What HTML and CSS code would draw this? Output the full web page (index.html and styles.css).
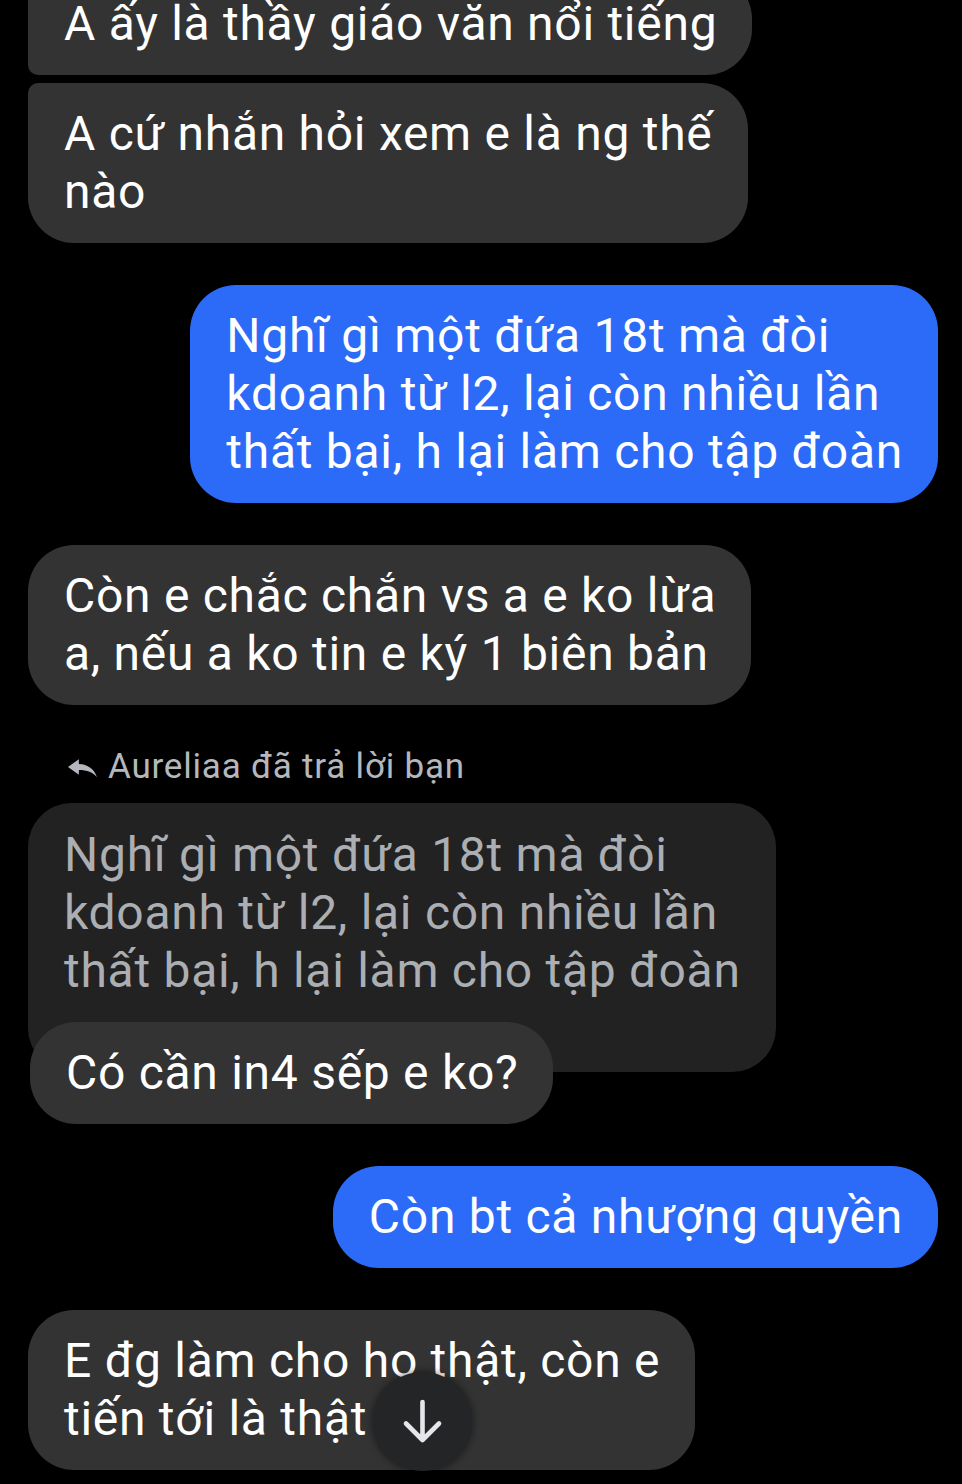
FILE: index.html
```html
<!DOCTYPE html>
<html lang="vi">
<head>
<meta charset="utf-8">
<title>Chat</title>
<link rel="stylesheet" href="styles.css">
</head>
<body>
<main class="thread">
  <div class="group">
    <div class="bubble in grp-mid">A ấy là thầy giáo văn nổi tiếng</div>
    <div class="bubble in grp-last">A cứ nhắn hỏi xem e là ng thế<br>nào</div>
  </div>

  <div class="group out-group">
    <div class="bubble out">Nghĩ gì một đứa 18t mà đòi<br>kdoanh từ l2, lại còn nhiều lần<br>thất bại, h lại làm cho tập đoàn</div>
  </div>

  <div class="group">
    <div class="bubble in">Còn e chắc chắn vs a e ko lừa<br>a, nếu a ko tin e ký 1 biên bản</div>
  </div>

  <div class="group reply-group">
    <div class="reply-label">
      <svg class="reply-icon" viewBox="0 0 28 18" width="29" height="19" aria-hidden="true"><path d="M0 7.5 L10.5 0 V4.6 C19 4.8 25.5 9.5 28 17.5 C24 12.6 18.5 10.4 10.5 10.4 V15 Z" fill="#b4b7bc"/></svg>
      <span>Aureliaa đã trả lời bạn</span>
    </div>
    <div class="bubble quoted">Nghĩ gì một đứa 18t mà đòi<br>kdoanh từ l2, lại còn nhiều lần<br>thất bại, h lại làm cho tập đoàn</div>
    <div class="bubble in over">Có cần in4 sếp e ko?</div>
  </div>

  <div class="group out-group">
    <div class="bubble out">Còn bt cả nhượng quyền</div>
  </div>

  <div class="group">
    <div class="bubble in last">E đg làm cho họ thật, còn e<br>tiến tới là thật =)))<span class="tail">)</span>
      <button class="scroll-down" type="button" aria-label="Cuộn xuống">
        <svg viewBox="0 0 99 99" width="99" height="99" aria-hidden="true"><path d="M49.5 30 V67 M33 51.5 L49.5 68 L66 51.5" fill="none" stroke="#e4e6eb" stroke-width="4.6" stroke-linecap="round" stroke-linejoin="round"/></svg>
      </button>
    </div>
  </div>
</main>
</body>
</html>
```

FILE: styles.css
```css
html, body {
  margin: 0;
  padding: 0;
  background: #000;
}

body {
  width: 962px;
  height: 1484px;
  overflow: hidden;
  font-family: Roboto, "Noto Sans", "Liberation Sans", sans-serif;
  font-size: 48px;
  line-height: 58px;
  letter-spacing: 0.72px;
  color: #fff;
}

.thread {
  display: flex;
  flex-direction: column;
  gap: 42px;
  padding: 0 24px 0 28px;
  margin-top: -27px;
}

.group {
  display: flex;
  flex-direction: column;
  align-items: flex-start;
  gap: 8px;
}

.out-group {
  align-items: flex-end;
}

.bubble {
  padding: 22px 35px 22px 36px;
  border-radius: 46px;
  white-space: nowrap;
}

.in {
  background: #333333;
}

.out {
  background: #2b6bf7;
}

.grp-mid {
  border-radius: 10px 46px 46px 10px;
}

.grp-last {
  border-radius: 10px 46px 46px 46px;
}

.reply-group {
  gap: 0;
}

.reply-label {
  display: flex;
  align-items: center;
  gap: 11px;
  height: 40px;
  margin: 0 0 16px 40px;
  font-size: 35px;
  line-height: 40px;
  letter-spacing: 0.8px;
  color: #b4b7bc;
}

.reply-icon {
  display: block;
  margin-top: 2px;
}

.quoted {
  background: #222222;
  color: #abaeb3;
  padding: 23px 35px 72px 36px;
  border-radius: 44px;
}

.over {
  position: relative;
  margin-top: -50px;
  margin-left: 2px;
}

.last {
  position: relative;
}

.tail {
  margin-left: -6px;
}

.scroll-down {
  position: absolute;
  left: 345px;
  top: 62px;
  width: 99px;
  height: 99px;
  padding: 0;
  border: none;
  border-radius: 50%;
  background: #242527;
  box-shadow: 0 0 6px 2px rgba(0, 0, 0, 0.35);
  display: flex;
  align-items: center;
  justify-content: center;
}

.scroll-down svg {
  display: block;
}
```
